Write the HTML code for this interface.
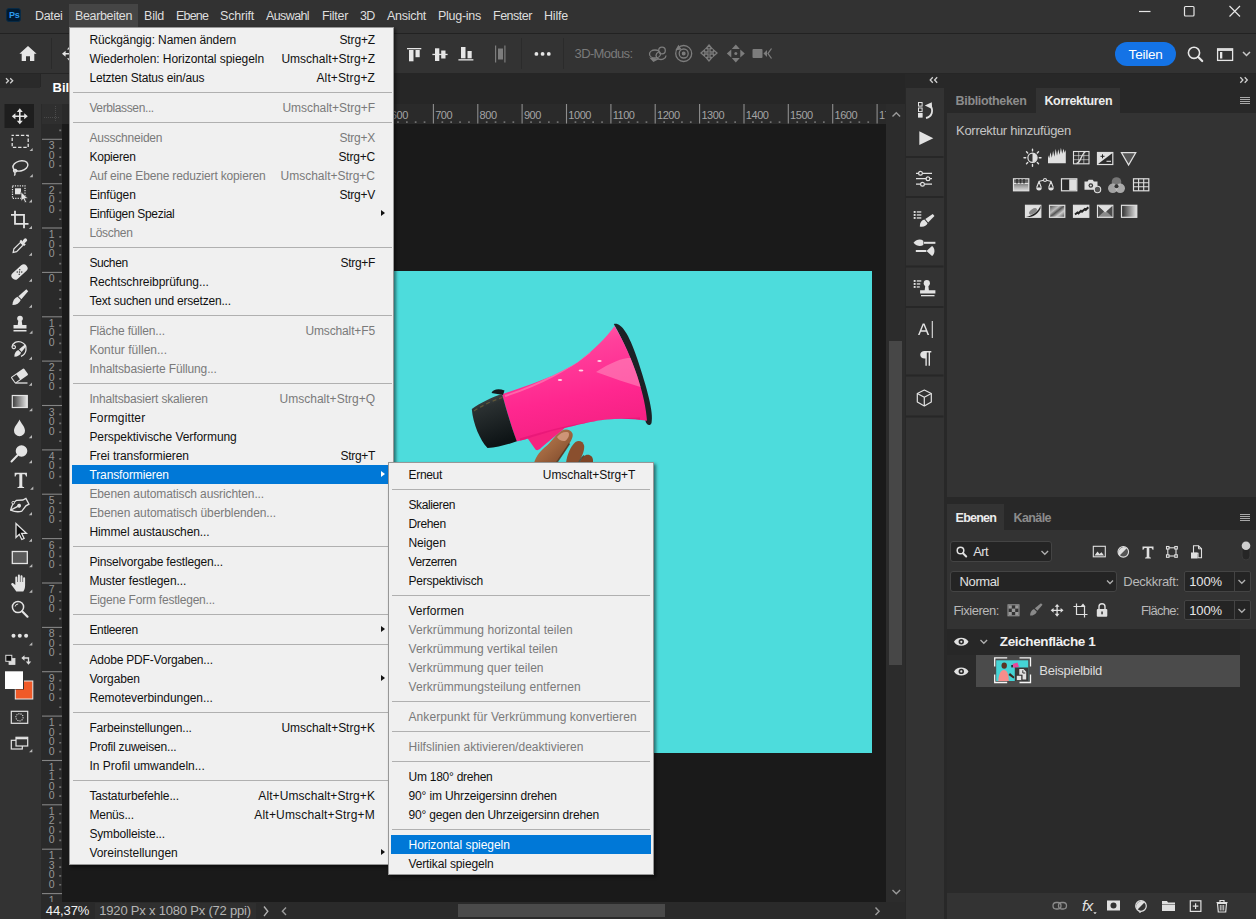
<!DOCTYPE html><html><head><meta charset="utf-8"><title>Photoshop</title><style>
*{box-sizing:border-box;margin:0;padding:0}
html,body{width:1256px;height:919px;overflow:hidden;background:#333;font-family:"Liberation Sans",sans-serif;font-size:12px;color:#ddd}
.abs,.b{position:absolute}
.t{position:absolute;white-space:nowrap;line-height:1}
svg{position:absolute;overflow:visible}
.menu{position:absolute;background:#f0f0f0;border:1px solid #979797;box-shadow:2px 2px 3px rgba(0,0,0,.5)}
.mt{position:absolute;white-space:nowrap;font-size:12px;line-height:14px}
.hl{position:absolute;height:19px;background:#0078d7}
.ar{position:absolute;width:0;height:0;border-left:4px solid #111;border-top:3.5px solid transparent;border-bottom:3.5px solid transparent}
.sep{position:absolute;height:1px;background:#b0b0b0}
.mb{position:absolute;top:9px;font-size:12.5px;line-height:14px;color:#e3e3e3;white-space:nowrap}
.rt{position:absolute;font-size:11px;line-height:11px;color:#a4a4a4;letter-spacing:-0.45px}
.vt{position:absolute;left:46.700px;width:10px;font-size:10.500px;line-height:9.500px;color:#969696;text-align:center}
</style></head><body>
<!--FRAME-->
<div class="b" style="left:0px;top:0px;width:1256px;height:33px;background:#323232;"></div>
<div class="b" style="left:0px;top:33px;width:1256px;height:1px;background:#222;"></div>
<div class="b" style="left:0px;top:34px;width:1256px;height:39px;background:#333;"></div>
<div class="b" style="left:0px;top:73px;width:1256px;height:15px;background:#262626;"></div>
<div class="b" style="left:0px;top:87px;width:41px;height:832px;background:#333;"></div>
<div class="b" style="left:0px;top:74px;width:40px;height:13.5px;background:#2a2a2a;"></div>
<div class="b" style="left:41px;top:74px;width:864px;height:30px;background:#262626;"></div>
<div class="b" style="left:41px;top:74px;width:40px;height:30px;background:#333;"></div>
<div class="b" style="left:41px;top:104px;width:845px;height:20px;background:#2a2a2a;"></div>
<div class="b" style="left:41px;top:124px;width:21px;height:778px;background:#2a2a2a;"></div>
<div class="b" style="left:62px;top:124px;width:824px;height:778px;background:#1a1a1a;"></div>
<div class="b" style="left:394px;top:271px;width:477.5px;height:481.5px;background:#4ddcdc;"></div>
<div class="b" style="left:886px;top:104px;width:19px;height:798px;background:#2c2c2c;"></div>
<div class="b" style="left:888.5px;top:340.5px;width:13px;height:324.5px;background:#474747;"></div>
<div class="b" style="left:41px;top:902px;width:864px;height:17px;background:#2a2a2a;"></div>
<div class="b" style="left:458px;top:904px;width:207px;height:13px;background:#4a4a4a;"></div>
<div class="b" style="left:905px;top:74px;width:351px;height:845px;background:#282828;"></div>
<div class="b" style="left:906px;top:88px;width:37.5px;height:831px;background:#333;"></div>
<div class="b" style="left:947px;top:88px;width:309px;height:25px;background:#282828;"></div>
<div class="b" style="left:1036px;top:88px;width:84px;height:26px;background:#333;"></div>
<div class="b" style="left:947px;top:113px;width:309px;height:383.5px;background:#333;"></div>
<div class="b" style="left:947px;top:504px;width:309px;height:26px;background:#282828;"></div>
<div class="b" style="left:947px;top:504px;width:57px;height:27px;background:#333;"></div>
<div class="b" style="left:947px;top:530px;width:309px;height:389px;background:#2e2e2e;"></div>
<!--MENUBAR-->
<div class="b" style="left:6px;top:8px;width:15px;height:14px;background:#001a30;border-radius:3px;border:1px solid #082a45"></div>
<span class="t" style="left:9px;top:10.5px;font-size:9px;font-weight:bold;color:#2c9bee;letter-spacing:-0.3px">Ps</span>
<div class="b" style="left:69px;top:4px;width:69px;height:23px;background:#454545"></div>
<span class="t" style="left:35px;top:9.8px;font-size:12.5px;color:#dedede;font-weight:normal;font-style:normal;letter-spacing:-0.338px;">Datei</span>
<span class="t" style="left:75px;top:9.8px;font-size:12.5px;color:#dedede;font-weight:normal;font-style:normal;letter-spacing:-0.347px;">Bearbeiten</span>
<span class="t" style="left:144px;top:9.8px;font-size:12.5px;color:#dedede;font-weight:normal;font-style:normal;letter-spacing:-0.211px;">Bild</span>
<span class="t" style="left:176px;top:9.8px;font-size:12.5px;color:#dedede;font-weight:normal;font-style:normal;letter-spacing:-0.800px;">Ebene</span>
<span class="t" style="left:220px;top:9.8px;font-size:12.5px;color:#dedede;font-weight:normal;font-style:normal;letter-spacing:-0.205px;">Schrift</span>
<span class="t" style="left:266px;top:9.8px;font-size:12.5px;color:#dedede;font-weight:normal;font-style:normal;letter-spacing:-0.607px;">Auswahl</span>
<span class="t" style="left:322px;top:9.8px;font-size:12.5px;color:#dedede;font-weight:normal;font-style:normal;letter-spacing:-0.297px;">Filter</span>
<span class="t" style="left:360px;top:9.8px;font-size:12.5px;color:#dedede;font-weight:normal;font-style:normal;letter-spacing:-0.742px;">3D</span>
<span class="t" style="left:387px;top:9.8px;font-size:12.5px;color:#dedede;font-weight:normal;font-style:normal;letter-spacing:-0.286px;">Ansicht</span>
<span class="t" style="left:438px;top:9.8px;font-size:12.5px;color:#dedede;font-weight:normal;font-style:normal;letter-spacing:-0.271px;">Plug-ins</span>
<span class="t" style="left:493px;top:9.8px;font-size:12.5px;color:#dedede;font-weight:normal;font-style:normal;letter-spacing:-0.484px;">Fenster</span>
<span class="t" style="left:544px;top:9.8px;font-size:12.5px;color:#dedede;font-weight:normal;font-style:normal;letter-spacing:-0.203px;">Hilfe</span>
<svg style="left:1130px;top:0" width="126" height="32" viewBox="0 0 126 32"><g stroke="#e6e6e6" stroke-width="1.2" fill="none"><path d="M9 11.5h11.5"/><rect x="54.5" y="6.5" width="9.5" height="9.5" rx="1"/><path d="M99.5 6l10.5 10.5M110 6l-10.5 10.5"/></g></svg>
<!--RULERS-->
<svg style="left:0;top:0" width="1256" height="919" viewBox="0 0 1256 919"><rect x="42" y="104" width="20" height="20" fill="#2f2f2f"/><g stroke="#4a4a4a" stroke-width="1" stroke-dasharray="1 1"><path d="M44 117.500h16M55.500 106v16"/></g><path d="M389.0 104v19.500" stroke="#8e8e8e" stroke-width="1.100"/><path d="M433.4 104v19.500" stroke="#8e8e8e" stroke-width="1.100"/><path d="M477.8 104v19.500" stroke="#8e8e8e" stroke-width="1.100"/><path d="M522.1 104v19.500" stroke="#8e8e8e" stroke-width="1.100"/><path d="M566.5 104v19.500" stroke="#8e8e8e" stroke-width="1.100"/><path d="M610.9 104v19.500" stroke="#8e8e8e" stroke-width="1.100"/><path d="M655.2 104v19.500" stroke="#8e8e8e" stroke-width="1.100"/><path d="M699.6 104v19.500" stroke="#8e8e8e" stroke-width="1.100"/><path d="M744.0 104v19.500" stroke="#8e8e8e" stroke-width="1.100"/><path d="M788.3 104v19.500" stroke="#8e8e8e" stroke-width="1.100"/><path d="M832.7 104v19.500" stroke="#8e8e8e" stroke-width="1.100"/><path d="M877.1 104v19.500" stroke="#8e8e8e" stroke-width="1.100"/><path d="M397.1 121.200h1.700v1.800h-1.700z M406.0 121.200h1.700v1.800h-1.700z M414.8 121.200h1.700v1.800h-1.700z M423.7 121.200h1.700v1.800h-1.700z M441.5 121.200h1.700v1.800h-1.700z M450.3 121.200h1.700v1.800h-1.700z M459.2 121.200h1.700v1.800h-1.700z M468.1 121.200h1.700v1.800h-1.700z M485.8 121.200h1.700v1.800h-1.700z M494.7 121.200h1.700v1.800h-1.700z M503.6 121.200h1.700v1.800h-1.700z M512.5 121.200h1.700v1.800h-1.700z M530.2 121.200h1.700v1.800h-1.700z M539.1 121.200h1.700v1.800h-1.700z M548.0 121.200h1.700v1.800h-1.700z M556.8 121.200h1.700v1.800h-1.700z M574.6 121.200h1.700v1.800h-1.700z M583.4 121.200h1.700v1.800h-1.700z M592.3 121.200h1.700v1.800h-1.700z M601.2 121.200h1.700v1.800h-1.700z M618.9 121.200h1.700v1.800h-1.700z M627.8 121.200h1.700v1.800h-1.700z M636.7 121.200h1.700v1.800h-1.700z M645.6 121.200h1.700v1.800h-1.700z M663.3 121.200h1.700v1.800h-1.700z M672.2 121.200h1.700v1.800h-1.700z M681.1 121.200h1.700v1.800h-1.700z M689.9 121.200h1.700v1.800h-1.700z M707.7 121.200h1.700v1.800h-1.700z M716.6 121.200h1.700v1.800h-1.700z M725.4 121.200h1.700v1.800h-1.700z M734.3 121.200h1.700v1.800h-1.700z M752.1 121.200h1.700v1.800h-1.700z M760.9 121.200h1.700v1.800h-1.700z M769.8 121.200h1.700v1.800h-1.700z M778.7 121.200h1.700v1.800h-1.700z M796.4 121.200h1.700v1.800h-1.700z M805.3 121.200h1.700v1.800h-1.700z M814.2 121.200h1.700v1.800h-1.700z M823.0 121.200h1.700v1.800h-1.700z M840.8 121.200h1.700v1.800h-1.700z M849.7 121.200h1.700v1.800h-1.700z M858.5 121.200h1.700v1.800h-1.700z M867.4 121.200h1.700v1.800h-1.700z" fill="#707070"/><path d="M42 139.3h20" stroke="#858585" stroke-width="1.100"/><path d="M42 183.7h20" stroke="#858585" stroke-width="1.100"/><path d="M42 228.0h20" stroke="#858585" stroke-width="1.100"/><path d="M42 272.4h20" stroke="#858585" stroke-width="1.100"/><path d="M42 316.8h20" stroke="#858585" stroke-width="1.100"/><path d="M42 361.1h20" stroke="#858585" stroke-width="1.100"/><path d="M42 405.5h20" stroke="#858585" stroke-width="1.100"/><path d="M42 449.9h20" stroke="#858585" stroke-width="1.100"/><path d="M42 494.2h20" stroke="#858585" stroke-width="1.100"/><path d="M42 538.6h20" stroke="#858585" stroke-width="1.100"/><path d="M42 583.0h20" stroke="#858585" stroke-width="1.100"/><path d="M42 627.4h20" stroke="#858585" stroke-width="1.100"/><path d="M42 671.7h20" stroke="#858585" stroke-width="1.100"/><path d="M42 716.1h20" stroke="#858585" stroke-width="1.100"/><path d="M42 760.5h20" stroke="#858585" stroke-width="1.100"/><path d="M42 804.8h20" stroke="#858585" stroke-width="1.100"/><path d="M42 849.2h20" stroke="#858585" stroke-width="1.100"/><path d="M42 893.6h20" stroke="#858585" stroke-width="1.100"/><path d="M59.200 129.6h2v1.700h-2z M59.200 147.4h2v1.700h-2z M59.200 156.2h2v1.700h-2z M59.200 165.1h2v1.700h-2z M59.200 174.0h2v1.700h-2z M59.200 191.7h2v1.700h-2z M59.200 200.6h2v1.700h-2z M59.200 209.5h2v1.700h-2z M59.200 218.4h2v1.700h-2z M59.200 236.1h2v1.700h-2z M59.200 245.0h2v1.700h-2z M59.200 253.9h2v1.700h-2z M59.200 262.7h2v1.700h-2z M59.200 280.5h2v1.700h-2z M59.200 289.3h2v1.700h-2z M59.200 298.2h2v1.700h-2z M59.200 307.1h2v1.700h-2z M59.200 324.8h2v1.700h-2z M59.200 333.7h2v1.700h-2z M59.200 342.6h2v1.700h-2z M59.200 351.5h2v1.700h-2z M59.200 369.2h2v1.700h-2z M59.200 378.1h2v1.700h-2z M59.200 387.0h2v1.700h-2z M59.200 395.8h2v1.700h-2z M59.200 413.6h2v1.700h-2z M59.200 422.5h2v1.700h-2z M59.200 431.3h2v1.700h-2z M59.200 440.2h2v1.700h-2z M59.200 458.0h2v1.700h-2z M59.200 466.8h2v1.700h-2z M59.200 475.7h2v1.700h-2z M59.200 484.6h2v1.700h-2z M59.200 502.3h2v1.700h-2z M59.200 511.2h2v1.700h-2z M59.200 520.1h2v1.700h-2z M59.200 528.9h2v1.700h-2z M59.200 546.7h2v1.700h-2z M59.200 555.6h2v1.700h-2z M59.200 564.4h2v1.700h-2z M59.200 573.3h2v1.700h-2z M59.200 591.1h2v1.700h-2z M59.200 599.9h2v1.700h-2z M59.200 608.8h2v1.700h-2z M59.200 617.7h2v1.700h-2z M59.200 635.4h2v1.700h-2z M59.200 644.3h2v1.700h-2z M59.200 653.2h2v1.700h-2z M59.200 662.1h2v1.700h-2z M59.200 679.8h2v1.700h-2z M59.200 688.7h2v1.700h-2z M59.200 697.6h2v1.700h-2z M59.200 706.4h2v1.700h-2z M59.200 724.2h2v1.700h-2z M59.200 733.0h2v1.700h-2z M59.200 741.9h2v1.700h-2z M59.200 750.8h2v1.700h-2z M59.200 768.5h2v1.700h-2z M59.200 777.4h2v1.700h-2z M59.200 786.3h2v1.700h-2z M59.200 795.2h2v1.700h-2z M59.200 812.9h2v1.700h-2z M59.200 821.8h2v1.700h-2z M59.200 830.7h2v1.700h-2z M59.200 839.5h2v1.700h-2z M59.200 857.3h2v1.700h-2z M59.200 866.2h2v1.700h-2z M59.200 875.0h2v1.700h-2z M59.200 883.9h2v1.700h-2z" fill="#707070"/><g stroke="#9a9a9a" stroke-width="1.400" fill="none"><path d="M892.500 116.500l3.800-3.800l3.800 3.800"/><path d="M892.500 890l3.800 3.800l3.800-3.800"/><path d="M875.500 907.500l3.600 3.800l-3.600 3.800"/><path d="M286 907.500l-3.600 3.800l3.600 3.800"/><path d="M264 906.500l3.800 4.800l-3.800 4.800" stroke="#b0b0b0"/></g></svg>
<div class="b" style="left:41px;top:104px;width:845px;height:20px;overflow:hidden">
<span class="rt" style="left:349.8px;top:5.700px">600</span>
<span class="rt" style="left:394.2px;top:5.700px">700</span>
<span class="rt" style="left:438.6px;top:5.700px">800</span>
<span class="rt" style="left:482.9px;top:5.700px">900</span>
<span class="rt" style="left:527.3px;top:5.700px">1000</span>
<span class="rt" style="left:571.7px;top:5.700px">1100</span>
<span class="rt" style="left:616.0px;top:5.700px">1200</span>
<span class="rt" style="left:660.4px;top:5.700px">1300</span>
<span class="rt" style="left:704.8px;top:5.700px">1400</span>
<span class="rt" style="left:749.1px;top:5.700px">1500</span>
<span class="rt" style="left:793.5px;top:5.700px">1600</span>
<span class="rt" style="left:837.9px;top:5.700px">1700</span>
</div>
<div class="b" style="left:0;top:124px;width:62px;height:778px;overflow:hidden">
<span class="vt" style="top:17.3px">3<br>0<br>0</span>
<span class="vt" style="top:61.7px">2<br>0<br>0</span>
<span class="vt" style="top:106.0px">1<br>0<br>0</span>
<span class="vt" style="top:150.4px">0</span>
<span class="vt" style="top:194.8px">1<br>0<br>0</span>
<span class="vt" style="top:239.1px">2<br>0<br>0</span>
<span class="vt" style="top:283.5px">3<br>0<br>0</span>
<span class="vt" style="top:327.9px">4<br>0<br>0</span>
<span class="vt" style="top:372.2px">5<br>0<br>0</span>
<span class="vt" style="top:416.6px">6<br>0<br>0</span>
<span class="vt" style="top:461.0px">7<br>0<br>0</span>
<span class="vt" style="top:505.4px">8<br>0<br>0</span>
<span class="vt" style="top:549.7px">9<br>0<br>0</span>
<span class="vt" style="top:594.1px">1<br>0<br>0<br>0</span>
<span class="vt" style="top:638.5px">1<br>1<br>0<br>0</span>
<span class="vt" style="top:682.8px">1<br>2<br>0<br>0</span>
<span class="vt" style="top:727.2px">1<br>3<br>0<br>0</span>
<span class="vt" style="top:771.6px">1<br>4<br>0<br>0</span>
</div>
<div class="b" style="left:95px;top:903px;width:161px;height:16px;background:#2f2f2f"></div>
<span class="t" style="left:45.8px;top:903.8px;font-size:13px;color:#f0f0f0;font-weight:normal;font-style:normal;letter-spacing:-0.099px;">44,37%</span>
<span class="t" style="left:99.3px;top:903.8px;font-size:13px;color:#b4b4b4;font-weight:normal;font-style:normal;letter-spacing:-0.201px;">1920 Px x 1080 Px (72 ppi)</span>
<!--PHOTO-->
<svg style="left:0;top:0" width="1256" height="919" viewBox="0 0 1256 919">
<defs>
<linearGradient id="pk" x1="0" y1="0" x2="0.25" y2="1"><stop offset="0" stop-color="#ff6cb0"/><stop offset="0.3" stop-color="#ff409b"/><stop offset="0.7" stop-color="#ff278f"/><stop offset="1" stop-color="#f52183"/></linearGradient>
<linearGradient id="bk" x1="0" y1="0" x2="0.3" y2="1"><stop offset="0" stop-color="#555a58"/><stop offset="0.3" stop-color="#2a3031"/><stop offset="1" stop-color="#0e1416"/></linearGradient>
<linearGradient id="hd" x1="0" y1="0" x2="1" y2="1"><stop offset="0" stop-color="#b9805c"/><stop offset="0.5" stop-color="#a0663f"/><stop offset="1" stop-color="#7a4629"/></linearGradient>
<clipPath id="cone"><path d="M614.5 326 C606 338 594 350 577.4 362.5 C562 372 544 380 524.5 386.5 L502 394.2 C506 408 511 426 516.6 441.5 C522 440.5 528 438.5 532.3 437 C545 433 556 430 567.6 427.3 C583 423.5 596 420.5 606.7 419.5 C622 418 636 419 647 420.8 C646 398 633 356 614.5 326 Z"/></clipPath>
<clipPath id="cv"><rect x="394" y="271" width="477" height="192"/></clipPath>
</defs>
<g clip-path="url(#cv)">
<!-- hand -->
<path d="M566 463 C567 455 570 447 575.500 442 C579 439.500 583.500 441.500 584.200 446 C584.500 452 581 458 578 463 Z" fill="#8a4f2e"/>
<path d="M579.500 463 C580.500 459 583 456 586.500 454.800 C590 454 592.800 456.500 593 460 L593 463 Z" fill="#7e4527"/>
<path d="M534 463 C536 456 541 450 547 445.500 C552 441 556 434 562 430.500 C566 428.500 571 430 572.500 433.500 C573.500 437 571 441 568.500 445 C565 451 560 458 556 463 Z" fill="url(#hd)"/>
<path d="M557 437 C560 433 565 431 568.500 432.500 C570 435 568 439 565 441 C562 441.500 558.500 440 557 437 Z" fill="#d9a184" opacity=".8"/>
<path d="M556.500 463 C561 456 566 449 569.500 443.500 M578.500 463 C580 459.500 582 457 584 455.500" stroke="#4f2a17" stroke-width="1.500" fill="none" opacity=".75"/>
<!-- handle -->
<path d="M526 436 L535.500 449.500 Q538 452 542 447 L566 427 Z" fill="#f5237f"/>
<!-- rim (black) -->
<path d="M613.8 324 C620 322 628 331 637 358 C647 388 654 413 651.5 423 C650 427 646 424.5 645.5 421 C646 400 634 360 613.8 324 Z" fill="#1b2226"/>
<!-- pink cone -->
<path d="M614.5 326 C606 338 594 350 577.4 362.5 C562 372 544 380 524.5 386.5 L502 394.2 C506 408 511 426 516.6 441.5 C522 440.5 528 438.5 532.3 437 C545 433 556 430 567.6 427.3 C583 423.5 596 420.5 606.7 419.5 C622 418 636 419 647 420.8 C646 398 633 356 614.5 326 Z" fill="url(#pk)"/>
<!-- highlights -->
<g clip-path="url(#cone)">
<path d="M596 372 C612 362 624 357 634 358 C639 370 642 380 643.5 388 C628 383 612 378 596 372 Z" fill="#ff8fc0" opacity=".55"/>
<path d="M505 396 C530 388 560 376 590 352" stroke="#ff7bb4" stroke-width="2" fill="none" opacity=".7"/>
<path d="M520 440 C550 431 590 420 640 419" stroke="#e0106f" stroke-width="3" fill="none" opacity=".55"/>
</g>
<g fill="#ffd3e6"><ellipse cx="560" cy="380" rx="2.2" ry="1"/><ellipse cx="581" cy="370.5" rx="2.4" ry="1.1"/><ellipse cx="599.5" cy="361" rx="2.2" ry="1.1"/></g>
<!-- back (black) part -->
<path d="M491.5 393 C493 389 499 388.5 504.5 390.5 L503 395 Z" fill="#141a1c"/>
<path d="M471.8 409 C480 403 492 397 502 394 C506 408 511 426 516.8 441.3 C508 444.5 497 447.5 487.5 448 C480 440 473 424 471.8 409 Z" fill="url(#bk)"/>
<path d="M474 411 C483 405 493 400.5 502.5 397.5" stroke="#6b5f3a" stroke-width="1.2" fill="none" opacity=".8" stroke-dasharray="4 3"/>
</g>
</svg>
<!--TOOLS-->
<svg style="left:0;top:0" width="41" height="919" viewBox="0 0 41 919"><path d="M6 78.300l2.500 2.500l-2.500 2.500M10.200 78.300l2.500 2.500l-2.500 2.500" stroke="#d0d0d0" stroke-width="1.300" fill="none"/><rect x="4.5" y="104" width="29.5" height="24" fill="#1e1e1e"/><g transform="translate(19.8 116.3)"><path d="M0 -8l3 3.6h-2.2v3.6h3.6v-2.2l3.6 3l-3.6 3v-2.2h-3.6v3.6h2.2l-3 3.6l-3-3.6h2.2v-3.6h-3.6v2.2l-3.6-3l3.6-3v2.2h3.6v-3.6h-2.2z" fill="#e4e4e4"/></g><g transform="translate(20.2 141.4)"><rect x="-8" y="-6" width="16" height="12" fill="none" stroke="#e4e4e4" stroke-width="1.3" stroke-dasharray="3.4 1.8" stroke-dashoffset="1.7"/></g><path d="M32.7 147.9v3.2h-3.2z" fill="#b8b8b8"/><g transform="translate(20.3 167.5)"><g fill="none" stroke="#e4e4e4" stroke-width="1.4"><ellipse cx="0.5" cy="-1.5" rx="7.6" ry="5" transform="rotate(-14)"/><path d="M-6 1.5c-1.5 1.5-.5 3.4 1.2 3c1.6-.4 1.4-2.6-.2-2.6c-1.3 0-1.8 1.600-.6 3.200c.7 1 .4 2 -.3 3"/></g></g><path d="M32.8 174.0v3.2h-3.2z" fill="#b8b8b8"/><g transform="translate(19.5 192.8)"><rect x="-7" y="-7" width="12.5" height="12.5" fill="none" stroke="#e4e4e4" stroke-width="1.2" stroke-dasharray="1.2 1.2"/><rect x="-4.5" y="-4.5" width="6" height="6" fill="#e4e4e4"/><path d="M1.5 -1v9.500l2.300-2.200l1.700 3.600l1.600-.7l-1.700-3.500h3.200z" fill="#e4e4e4" stroke="#333" stroke-width=".7"/></g><path d="M32.0 199.3v3.2h-3.2z" fill="#b8b8b8"/><g transform="translate(19.5 219.3)"><path d="M-4.500 -8.500v13h13.500M-8.500 -4.500h13v13.500" fill="none" stroke="#e4e4e4" stroke-width="1.8"/></g><path d="M32.0 225.8v3.2h-3.2z" fill="#b8b8b8"/><g transform="translate(19.5 246)"><g transform="rotate(45)"><rect x="-1.700" y="-10" width="3.400" height="5" rx="1.600" fill="#e4e4e4"/><rect x="-3.300" y="-5.500" width="6.600" height="2.200" fill="#e4e4e4"/><path d="M-1.900 -3.300v9.300l1.900 3l1.900-3v-9.300z" fill="none" stroke="#e4e4e4" stroke-width="1.200"/></g></g><path d="M32.0 252.5v3.2h-3.2z" fill="#b8b8b8"/><g transform="translate(19.5 272)"><g transform="rotate(-42)"><rect x="-9.500" y="-3.800" width="19" height="7.600" rx="3.800" fill="#e4e4e4"/><g fill="#333"><circle cx="-1.700" cy="-1.500" r=".7"/><circle cx="1.700" cy="-1.500" r=".7"/><circle cx="-1.700" cy="1.500" r=".7"/><circle cx="1.700" cy="1.500" r=".7"/><circle cx="0" cy="0" r=".7"/></g></g></g><path d="M32.0 278.5v3.2h-3.2z" fill="#b8b8b8"/><g transform="translate(19.5 298)"><g transform="rotate(45)"><path d="M-1.300 -11h2.600l.8 10.500h-4.200z" fill="#e4e4e4"/><path d="M-2.300 .5h4.600c1.200 3 .6 6.500-2.300 9.500c-2.900-3-3.500-6.500-2.300-9.500z" fill="#e4e4e4"/></g></g><path d="M32.0 304.5v3.2h-3.2z" fill="#b8b8b8"/><g transform="translate(20 324)"><circle cx="0" cy="-5.500" r="2.800" fill="#e4e4e4"/><path d="M-1.700 -3.500h3.400l.6 4.500h4.200v3.500h-13v-3.500h4.200z" fill="#e4e4e4"/><rect x="-6.500" y="6" width="13" height="1.500" fill="#e4e4e4"/></g><path d="M32.5 330.5v3.2h-3.2z" fill="#b8b8b8"/><g transform="translate(19.5 350)"><path d="M-7.500 -3c.5-4 5-6.500 9-5c3.500 1.300 5.500 4.500 5 8c-.4 3-2.400 5.300-5 6.300" fill="none" stroke="#e4e4e4" stroke-width="1.300"/><path d="M-7.500 -3c.3 1.800 2.500 2.300 3.300 .8c.7-1.400-.9-2.700-2-1.700" fill="none" stroke="#e4e4e4" stroke-width="1.200"/><g transform="translate(0.500 1) rotate(45)"><path d="M-1.100 -8h2.200l.7 7.500h-3.600z" fill="#e4e4e4"/><path d="M-2 .5h4c1 2.500 .5 5-2 7.500c-2.500-2.500-3-5-2-7.500z" fill="#e4e4e4"/></g></g><path d="M32.0 356.5v3.2h-3.2z" fill="#b8b8b8"/><g transform="translate(19.5 376)"><g transform="rotate(-35)"><rect x="-8" y="-4" width="16" height="8" rx="1" fill="#e4e4e4"/><rect x="-7" y="-3" width="5.500" height="6" fill="#333"/></g><path d="M-4 7h12" stroke="#e4e4e4" stroke-width="1.300"/></g><path d="M32.0 382.5v3.2h-3.2z" fill="#b8b8b8"/><defs><linearGradient id="tg" x1="0" x2="1"><stop offset="0" stop-color="#3a3a3a"/><stop offset="1" stop-color="#e8e8e8"/></linearGradient></defs><g transform="translate(19.8 401.5)"><rect x="-7.500" y="-6" width="15" height="12" fill="url(#tg)" stroke="#e4e4e4" stroke-width="1.200"/></g><path d="M32.3 408.0v3.2h-3.2z" fill="#b8b8b8"/><g transform="translate(19.5 428.5)"><path d="M0 -9c1.500 4 5.500 7 5.500 11.200a5.500 5.500 0 0 1-11 0c0-4.200 4-7.200 5.500-11.200z" fill="#e4e4e4"/></g><path d="M32.0 435.0v3.2h-3.2z" fill="#b8b8b8"/><g transform="translate(19.5 453.5)"><circle cx="2" cy="-2.500" r="5.800" fill="#e4e4e4"/><path d="M-2 1.800l-6 6.200" stroke="#e4e4e4" stroke-width="2" stroke-linecap="round"/></g><path d="M32.0 460.0v3.2h-3.2z" fill="#b8b8b8"/><g transform="translate(20.8 480)"><path transform="scale(.82 .9)" d="M-7.500 -8h15v4h-1.200c-.3-1.700-1-2.400-2.800-2.400h-1.700v12.400c0 1.300.5 1.700 2.200 1.800v1.200h-8v-1.200c1.700-.1 2.200-.5 2.200-1.800v-12.400h-1.700c-1.800 0-2.500.7-2.800 2.400h-1.200z" fill="#e4e4e4"/></g><path d="M33.3 486.5v3.2h-3.2z" fill="#b8b8b8"/><g transform="translate(19.5 505.5)"><g transform="rotate(62) translate(0 .5)" fill="none" stroke="#e4e4e4" stroke-width="1.300"><path d="M-3.300 -9.500h6.600v3.500l2.700 6c-.5 4-3 7-6 9.500c-3-2.500-5.500-5.500-6-9.500l2.700-6z"/><path d="M0 9.500v-8"/><circle cx="0" cy="0" r="1.300" fill="#e4e4e4"/></g><circle cx="-6.300" cy="-2.800" r="1.300" fill="#333" stroke="#e4e4e4" stroke-width="1"/></g><path d="M32.0 512.0v3.2h-3.2z" fill="#b8b8b8"/><g transform="translate(19.5 532)"><path d="M-3.500 -8.500v14l3.300-3.200l2.500 5.200l2.300-1.100l-2.500-5.100h4.800z" fill="#111" stroke="#e4e4e4" stroke-width="1.300" stroke-linejoin="miter"/></g><path d="M32.0 538.5v3.2h-3.2z" fill="#b8b8b8"/><g transform="translate(19.8 557.5)"><rect x="-7.500" y="-6" width="15" height="12" fill="#5a5a5a" stroke="#e4e4e4" stroke-width="1.300"/></g><path d="M32.3 564.0v3.2h-3.2z" fill="#b8b8b8"/><g transform="translate(19.8 583)"><path d="M-3.500 8.500c-1.500-2-3-4.500-4.800-6.500c-1-1.100.4-2.600 1.700-1.700l2.100 1.800v-7.600c0-1.500 2-1.500 2 0v4.500h.6v-6.500c0-1.500 2-1.500 2 0v6.500h.6v-5.700c0-1.500 2-1.500 2 0v5.700h.6v-3.700c0-1.500 2-1.500 2 0v7.200c0 2.500-.8 4.500-1.800 6z" fill="#e4e4e4"/></g><path d="M32.3 589.5v3.2h-3.2z" fill="#b8b8b8"/><g transform="translate(19.5 609)"><circle cx="-1.500" cy="-2" r="5.600" fill="none" stroke="#e4e4e4" stroke-width="1.500"/><path d="M2.600 2.300l5.400 5.400" stroke="#e4e4e4" stroke-width="2.200" stroke-linecap="round"/><path d="M-4.300 -2.500a3 3 0 0 1 3-2.500" stroke="#e4e4e4" stroke-width="1" fill="none"/></g><g transform="translate(19.8 635.7)"><circle cx="-6.300" r="2" fill="#e4e4e4"/><circle cx="0" r="2" fill="#e4e4e4"/><circle cx="6.300" r="2" fill="#e4e4e4"/></g><path d="M32.3 642.2v3.2h-3.2z" fill="#b8b8b8"/><rect x="9" y="658.500" width="6" height="6" fill="#ddd" stroke="#ddd" stroke-width=".8"/><rect x="5.800" y="655.300" width="6" height="6" fill="#111" stroke="#ddd" stroke-width="1"/><path d="M24 658h4.500v4" fill="none" stroke="#ddd" stroke-width="1.300"/><path d="M24.500 655.300v5.400l-3.200-2.700z M25.800 661.500h5.400l-2.700 3.200z" fill="#ddd"/><rect x="15.300" y="681" width="17.500" height="18" fill="#f05a28" stroke="#e8e8e8" stroke-width="1"/><rect x="14.500" y="680" width="9.500" height="9.500" fill="#333"/><rect x="5" y="671.300" width="18" height="17.700" fill="#fff" stroke="#222" stroke-width="0"/><rect x="11.300" y="711.300" width="16.400" height="12" fill="none" stroke="#e4e4e4" stroke-width="1.200"/><circle cx="19.500" cy="717.300" r="3.600" fill="none" stroke="#e4e4e4" stroke-width="1.100" stroke-dasharray="1.100 1.100"/><rect x="11.300" y="740.300" width="11" height="8.700" fill="#333" stroke="#e4e4e4" stroke-width="1.200"/><rect x="16" y="737.300" width="11.700" height="8.700" fill="#333" stroke="#e4e4e4" stroke-width="1.200"/><path d="M16 738.500h11.700" stroke="#e4e4e4" stroke-width="1.600"/><path d="M32.300 749v3.200h-3.200z" fill="#b8b8b8"/></svg>
<!--OPTBAR-->
<svg style="left:0;top:0" width="1256" height="74" viewBox="0 0 1256 74">
<path d="M28 46l8.600 7.800h-2.300v7.200h-4.300v-4.800h-4v4.800h-4.300v-7.200h-2.300z" fill="#e6e6e6"/>
<path d="M51.500 38v31" stroke="#2a2a2a" stroke-width="1"/>
<g transform="translate(70 53.800)"><path d="M0 -8l3 3.600h-2.200v3.600h3.600v-2.200l3.600 3l-3.600 3v-2.200h-3.600v3.600h2.200l-3 3.600l-3-3.600h2.200v-3.600h-3.600v2.200l-3.600-3l3.600-3v2.200h3.600v-3.600h-2.200z" fill="#e6e6e6"/></g>
<g fill="#e6e6e6"><rect x="407" y="48" width="14.300" height="1.300"/><rect x="409" y="50" width="4.500" height="11.300"/><rect x="415.500" y="50" width="4.200" height="7.200"/><rect x="432.400" y="53.800" width="15.200" height="1.300"/><rect x="435" y="48.300" width="4.300" height="12.700"/><rect x="441.200" y="50.500" width="4.300" height="8"/><rect x="458.400" y="59.200" width="15" height="1.300"/><rect x="461" y="47" width="4.500" height="11.300"/><rect x="467.500" y="51" width="4.200" height="7.300"/></g>
<g fill="#7d7d7d"><rect x="495" y="45.500" width="1.200" height="17"/><rect x="504.300" y="45.500" width="1.200" height="17"/><rect x="498" y="48.500" width="5" height="11"/></g>
<path d="M521.500 38v31M563.500 38v31" stroke="#2b2b2b" stroke-width="1"/>
<g fill="#e6e6e6"><circle cx="536.400" cy="53.900" r="1.900"/><circle cx="542.600" cy="53.900" r="1.900"/><circle cx="548.800" cy="53.900" r="1.900"/></g>
<g fill="none" stroke="#7d7d7d" stroke-width="1.300"><circle cx="662" cy="50.500" r="3.300"/><path d="M658.500 52a5 4 0 1 0 7.500 3.500"/><ellipse cx="655" cy="54" rx="5.500" ry="4"/><path d="M651 58.500l6 .8l-3.500 1.800z" fill="#7d7d7d"/><circle cx="683.700" cy="53.500" r="8"/><circle cx="683.700" cy="53.500" r="4.500"/><circle cx="683.700" cy="53.500" r="1.300" fill="#7d7d7d"/><path d="M676.500 49.500l2 -3.500l2 3z" fill="#7d7d7d"/><path d="M709 45l3 3.500h-2v3.500h3.500v-2l3.500 3l-3.500 3v-2h-3.500v3.500h2l-3 3.500l-3-3.500h2v-3.500h-3.500v2l-3.500-3l3.500-3v2h3.500v-3.500h-2z"/></g>
<g fill="#7d7d7d"><path d="M735.800 44.500l4 4.500h-8zM735.800 62.500l4-4.500h-8zM726.800 53.500l4.500-4v8zM744.800 53.500l-4.500-4v8z"/><circle cx="735.800" cy="53.500" r="1.500"/><rect x="752.500" y="49" width="10" height="9" rx="1"/><path d="M763.500 53.500l3.500-3.500v7z"/></g><path d="M771.500 48.500l-3.500 5l3.500 5" fill="none" stroke="#7d7d7d" stroke-width="1.300"/>
<circle cx="1194" cy="52.800" r="5.600" fill="none" stroke="#e6e6e6" stroke-width="1.600"/><path d="M1198.200 57l4 4" stroke="#e6e6e6" stroke-width="2.200" stroke-linecap="round"/>
<rect x="1217.600" y="48.800" width="15" height="11.600" fill="none" stroke="#e6e6e6" stroke-width="1.300"/><path d="M1217.600 50h15" stroke="#e6e6e6" stroke-width="1.800"/><rect x="1220" y="52" width="2.300" height="6.500" fill="#e6e6e6"/>
<path d="M1243 52l3.500 3.500l3.500-3.500" fill="none" stroke="#c8c8c8" stroke-width="1.500"/>
</svg>
<div class="b" style="left:1115px;top:42px;width:61px;height:24px;border-radius:12px;background:#1473e6"></div>
<span class="t" style="left:1128.6px;top:47.8px;font-size:13.5px;color:#fff;font-weight:normal;font-style:normal;letter-spacing:-0.197px;">Teilen</span>
<span class="t" style="left:574.6px;top:47.0px;font-size:13px;color:#7a7a7a;font-weight:normal;font-style:normal;letter-spacing:-0.642px;">3D-Modus:</span>
<span class="t" style="left:52.5px;top:81.0px;font-size:13px;color:#fff;font-weight:bold;font-style:normal;letter-spacing:0.000px;">Bild</span>
<!--STRIP-->
<svg style="left:0;top:0" width="1256" height="919" viewBox="0 0 1256 919"><path d="M932.800 77.300l-2.600 2.700l2.600 2.700M937.200 77.300l-2.600 2.700l2.600 2.700" stroke="#d0d0d0" stroke-width="1.300" fill="none"/><path d="M1240.300 77.300l2.600 2.700l-2.600 2.700M1244.700 77.300l2.600 2.700l-2.600 2.700" stroke="#d0d0d0" stroke-width="1.300" fill="none"/><rect x="906" y="156" width="37.500" height="2" fill="#272727"/><rect x="906" y="196" width="37.500" height="2" fill="#272727"/><rect x="906" y="265.5" width="37.500" height="2" fill="#272727"/><rect x="906" y="306" width="37.500" height="2" fill="#272727"/><rect x="906" y="374.5" width="37.500" height="2" fill="#272727"/><rect x="906" y="415.5" width="37.500" height="2" fill="#272727"/><g fill="none" stroke="#e2e2e2" stroke-width="1"><rect x="918.500" y="102.500" width="3.600" height="3.600"/><rect x="918.500" y="108" width="3.600" height="3.600"/><rect x="918.500" y="113.500" width="3.600" height="3.600" fill="#e2e2e2"/></g><path d="M926 118c6-1.200 8-7.500 4-13" fill="none" stroke="#e2e2e2" stroke-width="1.800"/><path d="M924.800 105.500l7-3.300l.3 6.800z" fill="#e2e2e2"/><path d="M919.300 131.300l14 6.900l-14 6.900z" fill="#e2e2e2"/><g stroke="#e2e2e2" stroke-width="1.200" fill="#333"><path d="M916 173.300h16M916 178.700h16M916 184.200h16"/><circle cx="920.500" cy="173.300" r="1.900"/><circle cx="928" cy="178.700" r="1.900"/><circle cx="922.500" cy="184.200" r="1.900"/></g><g fill="#e2e2e2"><rect x="913.700" y="211" width="1.900" height="1.900"/><rect x="913.700" y="214" width="1.900" height="1.900"/><rect x="913.700" y="217" width="1.900" height="1.900"/><rect x="916.800" y="211.300" width="4.500" height="1.300"/><rect x="916.800" y="214.300" width="4.500" height="1.300"/><rect x="916.800" y="217.300" width="4.500" height="1.300"/></g><g transform="translate(924.800 222.300) rotate(50)" fill="#e2e2e2"><path d="M-1.300 -11.500h2.600l.9 9h-4.400z"/><path d="M-2.500 -1.500h5c1.200 2.500.6 5.500-2.500 8c-3.100-2.500-3.700-5.500-2.500-8z"/></g><g fill="#e2e2e2"><path d="M913.500 242.700c3-3.500 7-4 9.800-2v4.200c-2.800 1.800-6.800 1.300-9.800-2.200z"/><rect x="923.800" y="241.800" width="11.600" height="2"/><rect x="915.800" y="250" width="10.500" height="2"/><path d="M926.500 251l5.500-5c3 1.500 3.500 8 0 10z"/></g><g fill="#e2e2e2"><rect x="913.700" y="280" width="1.900" height="1.900"/><rect x="913.700" y="283" width="1.900" height="1.900"/><rect x="913.700" y="286" width="1.900" height="1.900"/><rect x="916.800" y="280.300" width="4.500" height="1.300"/><rect x="916.800" y="283.300" width="3.500" height="1.300"/><rect x="916.800" y="286.300" width="3" height="1.300"/><circle cx="926.800" cy="283.200" r="3.100"/><path d="M925.300 285.500h3l.6 4.800h6.500v3.300h-15.300v-3.300h4.600z"/><rect x="921" y="295" width="13.500" height="1.300"/></g><path d="M918 335l4.700-11.500h1.800l4.700 11.500h-1.700l-1.300-3.300h-5.300l-1.300 3.300zM921.500 330.300h4.200l-2.100-5.300z" fill="#e2e2e2"/><path d="M932.300 321v17" stroke="#e2e2e2" stroke-width="1.100"/><path d="M924.500 351h6.800v1.400h-1.300v13.300h-1.400v-13.300h-1.800v13.300h-1.400v-7.200c-3 .3-5.200-1.300-5.200-3.700s2-3.800 4.300-3.800z" fill="#e2e2e2"/><g fill="none" stroke="#e2e2e2" stroke-width="1.200" stroke-linejoin="round"><path d="M924.300 390l7 3.500v8.500l-7 4l-7-4v-8.500z"/><path d="M917.300 393.500l7 3.700l7-3.700M924.300 397.200v8.800"/></g></svg>
<!--CORR-->
<span class="t" style="left:955.6px;top:95.0px;font-size:12.5px;color:#8c8c8c;font-weight:bold;font-style:normal;letter-spacing:-0.343px;">Bibliotheken</span>
<span class="t" style="left:1044.4px;top:95.0px;font-size:12.5px;color:#ececec;font-weight:bold;font-style:normal;letter-spacing:-0.332px;">Korrekturen</span>
<span class="t" style="left:956px;top:124.0px;font-size:13px;color:#c4c4c4;font-weight:normal;font-style:normal;letter-spacing:-0.284px;">Korrektur hinzufügen</span>
<svg style="left:0;top:0" width="1256" height="919" viewBox="0 0 1256 919"><defs>
<linearGradient id="gh" x1="0" x2="1"><stop offset="0" stop-color="#2b2b2b"/><stop offset="1" stop-color="#e6e6e6"/></linearGradient>
<linearGradient id="gv" x1="0" x2="0" y1="0" y2="1"><stop offset="0" stop-color="#444"/><stop offset="1" stop-color="#ddd"/></linearGradient>
<linearGradient id="gd" x1="0" y1="0" x2="1" y2="1"><stop offset="0" stop-color="#444"/><stop offset=".35" stop-color="#bbb"/><stop offset=".5" stop-color="#555"/><stop offset=".7" stop-color="#ccc"/><stop offset="1" stop-color="#444"/></linearGradient>
<radialGradient id="gr"><stop offset="0" stop-color="#555"/><stop offset="1" stop-color="#d8d8d8"/></radialGradient>
</defs><path d="M1240 97.5h10M1240 99.5h10M1240 101.5h10M1240 103.5h10" stroke="#a8a8a8" stroke-width="1"/><path d="M1240 514.5h10M1240 516.5h10M1240 518.5h10M1240 520.5h10" stroke="#a8a8a8" stroke-width="1"/><g transform="translate(1032.500 157.700)"><circle r="4.600" fill="none" stroke="#e0e0e0" stroke-width="1.200"/><path d="M0 -4.600a4.600 4.600 0 0 1 0 9.200z" fill="#e0e0e0"/><g stroke="#e0e0e0" stroke-width="1.400" stroke-linecap="round"><path d="M0 -6.800v-1.700M0 6.800v1.700M-6.800 0h-1.700M6.800 0h1.700M-4.800 -4.800l-1.200-1.200M4.800 -4.800l1.200-1.200M-4.800 4.800l-1.200 1.200M4.800 4.800l1.200 1.200"/></g></g><path d="M1048 163.200v-8l1.200 3l1.300-6l1.300 5.500l1.300-7l1.300 6l1.300-8l1.300 7l1.300-6.500l1.300 5.500l1.300-7l1.300 6l1.300-5l1.200 4l1.100-3v13.500z" fill="#e0e0e0"/><g fill="none" stroke="#e0e0e0"><rect x="1073.500" y="151.500" width="15.500" height="12.300" stroke-width="1.100"/><path d="M1078.700 151.500v12.300M1083.800 151.500v12.300M1073.500 155.600h15.500M1073.500 159.700h15.500" stroke-width=".8" opacity=".8"/><path d="M1076.500 163.500c5-1 4.500-10.500 9.500-12" stroke-width="1.300"/></g><rect x="1097.500" y="152.500" width="15.300" height="12" fill="#2a2a2a" stroke="#e0e0e0" stroke-width="1.200"/><path d="M1098 153h14.500l-14.500 11z" fill="#e0e0e0"/><path d="M1100.500 156.300h4M1102.500 154.300v4" stroke="#222" stroke-width="1"/><path d="M1106.500 161.300h4.500" stroke="#e0e0e0" stroke-width="1.100"/><path d="M1121.500 152.700h14.200l-7.100 12.300z" fill="#555" stroke="#e0e0e0" stroke-width="1.300"/><rect x="1013.500" y="178.800" width="15.300" height="12" fill="url(#gv)" stroke="#e0e0e0" stroke-width="1.200"/><path d="M1013.500 183.500h15.300" stroke="#e0e0e0" stroke-width="1"/><path d="M1017 179v4.500M1020.500 179v4.500M1024 179v4.500" stroke="#333" stroke-width="1.600"/><g fill="none" stroke="#e0e0e0" stroke-width="1.100"><circle cx="1045" cy="180" r="1.500"/><path d="M1038.500 181.500l5-1.300M1046.500 180.200l5 1.300M1039 181.500l-2.300 6M1039 181.500l2.300 6M1051 181.500l-2.300 6M1051 181.500l2.300 6"/></g><path d="M1036.200 187.500h5.600a2.800 3 0 0 1-5.600 0zM1048.200 187.500h5.600a2.800 3 0 0 1-5.600 0z" fill="#e0e0e0"/><rect x="1061.500" y="178.800" width="15.300" height="12" fill="#2a2a2a" stroke="#e0e0e0" stroke-width="1.200"/><rect x="1069.200" y="179.300" width="7.200" height="11" fill="#e0e0e0"/><path d="M1084.500 181.500h3l1.200-1.800h4l1.200 1.800h3.600v8.300h-13z" fill="#e0e0e0"/><circle cx="1090.800" cy="185.500" r="2.300" fill="#333"/><circle cx="1090.800" cy="185.500" r="1.100" fill="#e0e0e0"/><circle cx="1097.500" cy="189.500" r="3.200" fill="#555" stroke="#e0e0e0" stroke-width="1.100"/><g opacity=".95"><circle cx="1116.500" cy="182" r="4.800" fill="#7a7a7a"/><circle cx="1112.800" cy="188.300" r="4.800" fill="#bdbdbd" opacity=".85"/><circle cx="1120.200" cy="188.300" r="4.800" fill="#cfcfcf" opacity=".8"/><circle cx="1116.500" cy="186.200" r="2" fill="#333"/></g><g fill="none" stroke="#e0e0e0"><rect x="1133.500" y="178.800" width="15.300" height="12" stroke-width="1.200"/><path d="M1138.600 178.800v12M1143.700 178.800v12M1133.500 182.800h15.300M1133.500 186.800h15.300" stroke-width="1.100"/></g><rect x="1025.500" y="205.300" width="15.300" height="12" fill="#e0e0e0" stroke="#e0e0e0" stroke-width="1.200"/><path d="M1026 217c6-1 13-6 14.500-11.500v3c-2 5-7 8-11 8.500z" fill="#222"/><ellipse cx="1033" cy="211.300" rx="4.500" ry="2.300" transform="rotate(-35 1033 211.300)" fill="#888"/><rect x="1049.500" y="205.300" width="15.300" height="12" fill="url(#gd)" stroke="#e0e0e0" stroke-width="1.200"/><rect x="1073.500" y="205.300" width="15.300" height="12" fill="#e0e0e0" stroke="#e0e0e0" stroke-width="1.200"/><path d="M1075 214.500l2.500-2l1 .8l2.500-2.500l1 .8l2.800-2.600l1 .8l2.500-2.500" fill="none" stroke="#222" stroke-width="2"/><rect x="1097.500" y="205.300" width="15.300" height="12" fill="#8a8a8a" stroke="#e0e0e0" stroke-width="1.200"/><path d="M1098 206l7.200 6.500l7.200-6.500z" fill="#e0e0e0"/><path d="M1098 206v11l6-5.500zM1112.400 206v11l-6-5.500z" fill="#4a4a4a"/><rect x="1121.500" y="205.300" width="15.300" height="12" fill="url(#gh)" stroke="#e0e0e0" stroke-width="1.200"/></svg>
<!--LAYERS-->
<div class="b" style="left:947px;top:530px;width:309px;height:99px;background:#333;"></div>
<div class="b" style="left:947px;top:629px;width:309px;height:264px;background:#2a2a2a;"></div>
<div class="b" style="left:947px;top:893px;width:309px;height:26px;background:#333;"></div>
<div class="b" style="left:947px;top:629px;width:293px;height:25.5px;background:#272727;"></div>
<div class="b" style="left:976px;top:655px;width:263.5px;height:31.5px;background:#4b4b4b;"></div>
<div class="b" style="left:950px;top:541px;width:101.5px;height:21px;background:#242424;border:1px solid #444;border-radius:3px"></div>
<div class="b" style="left:950px;top:570.5px;width:167px;height:21.5px;background:#242424;border:1px solid #444;border-radius:3px"></div>
<div class="b" style="left:1183.5px;top:570.5px;width:67px;height:21.5px;background:#242424;border:1px solid #444;border-radius:2px"></div>
<div class="b" style="left:1233.5px;top:571px;width:1px;height:20.5px;background:#444;"></div>
<div class="b" style="left:1183.5px;top:600px;width:67px;height:20px;background:#242424;border:1px solid #444;border-radius:2px"></div>
<div class="b" style="left:1233.5px;top:600.5px;width:1px;height:19px;background:#444;"></div>
<span class="t" style="left:955.6px;top:511.8px;font-size:12.5px;color:#ececec;font-weight:bold;font-style:normal;letter-spacing:-0.793px;">Ebenen</span>
<span class="t" style="left:1013.5px;top:511.8px;font-size:12.5px;color:#8c8c8c;font-weight:bold;font-style:normal;letter-spacing:-0.583px;">Kanäle</span>
<span class="t" style="left:973.2px;top:545.0px;font-size:13px;color:#e0e0e0;font-weight:normal;font-style:normal;letter-spacing:-0.608px;">Art</span>
<span class="t" style="left:959.6px;top:574.9px;font-size:13px;color:#e0e0e0;font-weight:normal;font-style:normal;letter-spacing:-0.418px;">Normal</span>
<span class="t" style="left:1123.3px;top:574.9px;font-size:13px;color:#b8b8b8;font-weight:normal;font-style:normal;letter-spacing:-0.302px;">Deckkraft:</span>
<span class="t" style="left:1189.2px;top:574.9px;font-size:13px;color:#e6e6e6;font-weight:normal;font-style:normal;letter-spacing:-0.113px;">100%</span>
<span class="t" style="left:953.4px;top:603.8px;font-size:13px;color:#b8b8b8;font-weight:normal;font-style:normal;letter-spacing:-0.473px;">Fixieren:</span>
<span class="t" style="left:1141px;top:603.8px;font-size:13px;color:#b8b8b8;font-weight:normal;font-style:normal;letter-spacing:-0.692px;">Fläche:</span>
<span class="t" style="left:1189.2px;top:603.8px;font-size:13px;color:#e6e6e6;font-weight:normal;font-style:normal;letter-spacing:-0.113px;">100%</span>
<span class="t" style="left:999.8px;top:634.8px;font-size:13.5px;color:#f0f0f0;font-weight:bold;font-style:normal;letter-spacing:-0.380px;">Zeichenfläche 1</span>
<span class="t" style="left:1039.3px;top:663.8px;font-size:13px;color:#dcdcdc;font-weight:normal;font-style:normal;letter-spacing:-0.255px;">Beispielbild</span>
<svg style="left:0;top:0" width="1256" height="919" viewBox="0 0 1256 919"><circle cx="960.500" cy="550.500" r="3.300" fill="none" stroke="#e0e0e0" stroke-width="1.500"/><path d="M963 553.200l3.200 3.300" stroke="#e0e0e0" stroke-width="2" stroke-linecap="round"/><g fill="none" stroke="#b0b0b0" stroke-width="1.300"><path d="M1041.500 551l3.300 3.300l3.300-3.300"/><path d="M1107 580.500l3 3l3-3"/><path d="M1238.500 580l3.300 3.300l3.300-3.300"/><path d="M1238.500 609l3.300 3.300l3.300-3.300"/><path d="M980.500 640l3.300 3.300l3.300-3.300"/></g><rect x="1093.300" y="546.300" width="12" height="10.500" fill="none" stroke="#e0e0e0" stroke-width="1.100"/><path d="M1094.500 555.500l3-4l2 2.500l2-1.800l2.500 3.300z" fill="#e0e0e0"/><circle cx="1123.300" cy="551.800" r="5.300" fill="#555" stroke="#e0e0e0" stroke-width="1.100"/><path d="M1119.600 555.500a5.300 5.300 0 0 1 7.400-7.400z" fill="#e0e0e0"/><path d="M1142.500 546.500h11v3.200h-1c-.2-1.300-.8-1.800-2-1.800h-1.200v8.300c0 .9.400 1.200 1.600 1.300v1h-5.800v-1c1.200-.1 1.600-.4 1.600-1.300v-8.300h-1.200c-1.200 0-1.800.5-2 1.800h-1z" fill="#e0e0e0"/><g fill="#333" stroke="#e0e0e0" stroke-width="1.100"><rect x="1167.800" y="547.800" width="8.200" height="8.200" fill="none"/><rect x="1166.500" y="546.500" width="2.500" height="2.500"/><rect x="1174.800" y="546.500" width="2.500" height="2.500"/><rect x="1166.500" y="554.800" width="2.500" height="2.500"/><rect x="1174.800" y="554.800" width="2.500" height="2.500"/></g><path d="M1193.500 545.800h5l3 3v9h-3.500v-4.500h-4.500z" fill="none" stroke="#e0e0e0" stroke-width="1.100"/><path d="M1198.500 545.800v3h3" fill="none" stroke="#e0e0e0" stroke-width="1"/><rect x="1191" y="552.500" width="6.500" height="6" fill="#e0e0e0"/><rect x="1242" y="541" width="8" height="19" rx="4" fill="#262626" stroke="#3a3a3a" stroke-width="1"/><circle cx="1246" cy="545.800" r="4.300" fill="#cfcfcf"/><g fill="#9a9a9a"><rect x="1008" y="604.800" width="11" height="11" fill="none" stroke="#9a9a9a" stroke-width="1"/><rect x="1008.500" y="605.300" width="3.300" height="3.300"/><rect x="1015.200" y="605.300" width="3.300" height="3.300"/><rect x="1011.800" y="608.600" width="3.400" height="3.400"/><rect x="1008.500" y="612" width="3.300" height="3.300"/><rect x="1015.200" y="612" width="3.300" height="3.300"/></g><g transform="translate(1035.400 610.300) rotate(45)" fill="#8a8a8a"><path d="M-1.100 -9h2.200l.7 8h-3.600z"/><path d="M-2 0h4c1 2.500.5 5-2 7.500c-2.500-2.500-3-5-2-7.500z"/></g><g transform="translate(1057.100 610.300) scale(.8)"><path d="M0 -8l3 3.600h-2.200v3.600h3.600v-2.200l3.600 3l-3.600 3v-2.200h-3.600v3.600h2.200l-3 3.600l-3-3.600h2.200v-3.600h-3.600v2.200l-3.600-3l3.600-3v2.200h3.600v-3.600h-2.200z" fill="#e0e0e0"/></g><g fill="none" stroke="#e0e0e0" stroke-width="1.200"><path d="M1076.500 603.500v11h11M1073.500 606.500h11v11"/><path d="M1083 603.500l2.500 3h-5z" fill="#e0e0e0" stroke="none"/></g><rect x="1096.800" y="609" width="10.500" height="7.800" rx="1" fill="#e0e0e0"/><path d="M1099 609v-2.200a3 3 0 0 1 6 0v2.200" fill="none" stroke="#e0e0e0" stroke-width="1.400"/><rect x="1101.300" y="611.500" width="1.500" height="2.800" fill="#333"/><path d="M954 641.8c2.500-5.300 12-5.300 14.500 0c-2.500 5.300-12 5.300-14.500 0z" fill="#e0e0e0"/><circle cx="961.300" cy="641.8" r="2.700" fill="#2a2a2a"/><circle cx="961.300" cy="641.8" r="1.100" fill="#e0e0e0"/><path d="M954 671.4c2.500-5.300 12-5.300 14.500 0c-2.500 5.300-12 5.300-14.500 0z" fill="#e0e0e0"/><circle cx="961.300" cy="671.4" r="2.700" fill="#2a2a2a"/><circle cx="961.300" cy="671.4" r="1.100" fill="#e0e0e0"/><rect x="996.200" y="660.300" width="32" height="20.700" fill="#45d4d6"/><path d="M998.300 681c.2-6 2-10.500 5.500-11c3.500 .3 4.800 4 5 11z" fill="#f78d8b"/><ellipse cx="1004.200" cy="665.600" rx="2.700" ry="3.200" fill="#5a3324"/><path d="M1008.500 675l5 3.500l1-1.500l-4.500-4z" fill="#3b241b"/><path d="M1012.500 664l5-1.500l1.500 4.500l-5.500 1z" fill="#e8489a"/><rect x="1011.300" y="665" width="1.600" height="2.400" fill="#1d2327"/><g fill="none" stroke="#f6f6f6" stroke-width="1.300"><path d="M994.700 666.500v-8.700h12.500M1019.500 657.800h11v8.700M1030.500 674.500v8h-11M1007.200 682.500h-12.500v-8"/></g><rect x="1014.800" y="667.500" width="13.400" height="13.500" fill="#383838"/><path d="M1019.300 669h4.200l2.700 2.700v7.800h-3.700v-4.800h-3.200z" fill="#e0e0e0"/><path d="M1022.800 670.300v2.700h2.500" fill="none" stroke="#383838" stroke-width="1"/><rect x="1016.300" y="675.300" width="5.400" height="5.200" fill="#e0e0e0" stroke="#383838" stroke-width=".8"/><g fill="none" stroke="#8a8a8a" stroke-width="1.300"><rect x="1053" y="902.500" width="8" height="6.500" rx="3.200"/><rect x="1058.500" y="902.500" width="8" height="6.500" rx="3.200"/></g><path d="M1138.300 911.300h3.400l-1.700 2zM1093.300 912.300h3.400l-1.700 2z" fill="#e0e0e0"/><rect x="1107" y="900.500" width="13" height="10" fill="#e0e0e0"/><circle cx="1113.500" cy="905.500" r="3" fill="#333"/><circle cx="1141" cy="906" r="5.300" fill="#333" stroke="#e0e0e0" stroke-width="1.200"/><path d="M1137.300 909.700a5.300 5.300 0 0 1 7.400-7.400z" fill="#e0e0e0"/><path d="M1162 901h5l1 1.500h7v1.500h-13z" fill="#e0e0e0"/><rect x="1162" y="904.500" width="13" height="6.500" fill="#e0e0e0"/><rect x="1190.300" y="900.800" width="10.600" height="10.600" fill="none" stroke="#e0e0e0" stroke-width="1.200"/><path d="M1195.600 903.300v5.600M1192.800 906.100h5.600" stroke="#e0e0e0" stroke-width="1.200"/><g fill="none" stroke="#e0e0e0" stroke-width="1.200"><path d="M1217.500 903.500h9l-.8 8.500h-7.400zM1216.500 902.500h11M1220 902v-1.500h4v1.500"/><path d="M1220.300 905v5.500M1222 905v5.500M1223.700 905v5.500" stroke-width=".9"/></g></svg>
<span class="t" style="left:1082px;top:897.500px;font-size:15.500px;font-style:italic;color:#e0e0e0;letter-spacing:-0.8px">fx</span>
<!--MENUS-->
<div class="menu" style="left:69px;top:27px;width:325px;height:838px"></div>
<span class="mt" style="left:89.4px;top:33.0px;color:#111;letter-spacing:-0.11px">Rückgängig: Namen ändern</span>
<span class="mt" style="left:339.5px;top:33.0px;color:#111;letter-spacing:-0.143px">Strg+Z</span>
<span class="mt" style="left:89.4px;top:52.0px;color:#111;letter-spacing:-0.044px">Wiederholen: Horizontal spiegeln</span>
<span class="mt" style="left:281.4px;top:52.0px;color:#111;letter-spacing:0.015px">Umschalt+Strg+Z</span>
<span class="mt" style="left:89.4px;top:71.0px;color:#111;letter-spacing:-0.175px">Letzten Status ein/aus</span>
<span class="mt" style="left:316.5px;top:71.0px;color:#111;letter-spacing:0.114px">Alt+Strg+Z</span>
<div class="sep" style="left:72.5px;width:319.5px;top:92px"></div>
<span class="mt" style="left:89.4px;top:101.0px;color:#7a7a7a;letter-spacing:-0.383px">Verblassen...</span>
<span class="mt" style="left:282.5px;top:101.0px;color:#7a7a7a;letter-spacing:-0.058px">Umschalt+Strg+F</span>
<div class="sep" style="left:72.5px;width:319.5px;top:122px"></div>
<span class="mt" style="left:89.4px;top:131.0px;color:#7a7a7a;letter-spacing:-0.208px">Ausschneiden</span>
<span class="mt" style="left:339.5px;top:131.0px;color:#7a7a7a;letter-spacing:-0.255px">Strg+X</span>
<span class="mt" style="left:89.4px;top:150.0px;color:#111;letter-spacing:-0.218px">Kopieren</span>
<span class="mt" style="left:338.5px;top:150.0px;color:#111;letter-spacing:-0.198px">Strg+C</span>
<span class="mt" style="left:89.4px;top:169.0px;color:#7a7a7a;letter-spacing:-0.162px">Auf eine Ebene reduziert kopieren</span>
<span class="mt" style="left:280.6px;top:169.0px;color:#7a7a7a;letter-spacing:-0.02px">Umschalt+Strg+C</span>
<span class="mt" style="left:89.4px;top:188.0px;color:#111;letter-spacing:-0.134px">Einfügen</span>
<span class="mt" style="left:339.5px;top:188.0px;color:#111;letter-spacing:-0.255px">Strg+V</span>
<span class="mt" style="left:89.4px;top:207.0px;color:#111;letter-spacing:-0.311px">Einfügen Spezial</span>
<span class="ar" style="left:380.5px;top:210.4px;border-left-color:#111"></span>
<span class="mt" style="left:89.4px;top:226.0px;color:#7a7a7a;letter-spacing:-0.325px">Löschen</span>
<div class="sep" style="left:72.5px;width:319.5px;top:247px"></div>
<span class="mt" style="left:89.4px;top:256.0px;color:#111;letter-spacing:-0.401px">Suchen</span>
<span class="mt" style="left:340.5px;top:256.0px;color:#111;letter-spacing:-0.31px">Strg+F</span>
<span class="mt" style="left:89.4px;top:275.0px;color:#111;letter-spacing:-0.061px">Rechtschreibprüfung...</span>
<span class="mt" style="left:89.4px;top:294.0px;color:#111;letter-spacing:-0.195px">Text suchen und ersetzen...</span>
<div class="sep" style="left:72.5px;width:319.5px;top:315px"></div>
<span class="mt" style="left:89.4px;top:324.0px;color:#7a7a7a;letter-spacing:-0.159px">Fläche füllen...</span>
<span class="mt" style="left:305.4px;top:324.0px;color:#7a7a7a;letter-spacing:-0.13px">Umschalt+F5</span>
<span class="mt" style="left:89.4px;top:343.0px;color:#7a7a7a;letter-spacing:0.019px">Kontur füllen...</span>
<span class="mt" style="left:89.4px;top:362.0px;color:#7a7a7a;letter-spacing:-0.129px">Inhaltsbasierte Füllung...</span>
<div class="sep" style="left:72.5px;width:319.5px;top:383px"></div>
<span class="mt" style="left:89.4px;top:392.0px;color:#7a7a7a;letter-spacing:-0.181px">Inhaltsbasiert skalieren</span>
<span class="mt" style="left:279.6px;top:392.0px;color:#7a7a7a;letter-spacing:0.002px">Umschalt+Strg+Q</span>
<span class="mt" style="left:89.4px;top:411.0px;color:#111;letter-spacing:0.121px">Formgitter</span>
<span class="mt" style="left:89.4px;top:430.0px;color:#111;letter-spacing:-0.081px">Perspektivische Verformung</span>
<span class="mt" style="left:89.4px;top:449.0px;color:#111;letter-spacing:-0.099px">Frei transformieren</span>
<span class="mt" style="left:340.5px;top:449.0px;color:#111;letter-spacing:-0.31px">Strg+T</span>
<div class="hl" style="left:72px;width:316px;top:465px"></div>
<span class="mt" style="left:89.4px;top:468.0px;color:#fff;letter-spacing:-0.102px">Transformieren</span>
<span class="ar" style="left:380.5px;top:471.4px;border-left-color:#fff"></span>
<span class="mt" style="left:89.4px;top:487.0px;color:#7a7a7a;letter-spacing:-0.107px">Ebenen automatisch ausrichten...</span>
<span class="mt" style="left:89.4px;top:506.0px;color:#7a7a7a;letter-spacing:-0.084px">Ebenen automatisch überblenden...</span>
<span class="mt" style="left:89.4px;top:525.0px;color:#111;letter-spacing:-0.089px">Himmel austauschen...</span>
<div class="sep" style="left:72.5px;width:319.5px;top:546px"></div>
<span class="mt" style="left:89.4px;top:555.0px;color:#111;letter-spacing:-0.177px">Pinselvorgabe festlegen...</span>
<span class="mt" style="left:89.4px;top:574.0px;color:#111;letter-spacing:-0.101px">Muster festlegen...</span>
<span class="mt" style="left:89.4px;top:593.0px;color:#7a7a7a;letter-spacing:-0.218px">Eigene Form festlegen...</span>
<div class="sep" style="left:72.5px;width:319.5px;top:614px"></div>
<span class="mt" style="left:89.4px;top:623.0px;color:#111;letter-spacing:-0.331px">Entleeren</span>
<span class="ar" style="left:380.5px;top:626.4px;border-left-color:#111"></span>
<div class="sep" style="left:72.5px;width:319.5px;top:644px"></div>
<span class="mt" style="left:89.4px;top:653.0px;color:#111;letter-spacing:-0.192px">Adobe PDF-Vorgaben...</span>
<span class="mt" style="left:89.4px;top:672.0px;color:#111;letter-spacing:-0.111px">Vorgaben</span>
<span class="ar" style="left:380.5px;top:675.4px;border-left-color:#111"></span>
<span class="mt" style="left:89.4px;top:691.0px;color:#111;letter-spacing:-0.064px">Remoteverbindungen...</span>
<div class="sep" style="left:72.5px;width:319.5px;top:712px"></div>
<span class="mt" style="left:89.4px;top:721.0px;color:#111;letter-spacing:-0.15px">Farbeinstellungen...</span>
<span class="mt" style="left:281.4px;top:721.0px;color:#111;letter-spacing:-0.03px">Umschalt+Strg+K</span>
<span class="mt" style="left:89.4px;top:740.0px;color:#111;letter-spacing:-0.206px">Profil zuweisen...</span>
<span class="mt" style="left:89.4px;top:759.0px;color:#111;letter-spacing:0.0px">In Profil umwandeln...</span>
<div class="sep" style="left:72.5px;width:319.5px;top:780px"></div>
<span class="mt" style="left:89.4px;top:789.0px;color:#111;letter-spacing:-0.137px">Tastaturbefehle...</span>
<span class="mt" style="left:258.3px;top:789.0px;color:#111;letter-spacing:0.086px">Alt+Umschalt+Strg+K</span>
<span class="mt" style="left:89.4px;top:808.0px;color:#111;letter-spacing:-0.204px">Menüs...</span>
<span class="mt" style="left:254.3px;top:808.0px;color:#111;letter-spacing:0.192px">Alt+Umschalt+Strg+M</span>
<span class="mt" style="left:89.4px;top:827.0px;color:#111;letter-spacing:-0.169px">Symbolleiste...</span>
<span class="mt" style="left:89.4px;top:846.0px;color:#111;letter-spacing:-0.027px">Voreinstellungen</span>
<span class="ar" style="left:380.5px;top:849.4px;border-left-color:#111"></span>
<div class="menu" style="left:388px;top:462px;width:266px;height:413px"></div>
<span class="mt" style="left:408.5px;top:468.0px;color:#111;letter-spacing:-0.31px">Erneut</span>
<span class="mt" style="left:542.8px;top:468.0px;color:#111;letter-spacing:-0.058px">Umschalt+Strg+T</span>
<div class="sep" style="left:392px;width:258px;top:489px"></div>
<span class="mt" style="left:408.5px;top:498.0px;color:#111;letter-spacing:-0.392px">Skalieren</span>
<span class="mt" style="left:408.5px;top:517.0px;color:#111;letter-spacing:-0.36px">Drehen</span>
<span class="mt" style="left:408.5px;top:536.0px;color:#111;letter-spacing:-0.139px">Neigen</span>
<span class="mt" style="left:408.5px;top:555.0px;color:#111;letter-spacing:-0.437px">Verzerren</span>
<span class="mt" style="left:408.5px;top:574.0px;color:#111;letter-spacing:-0.213px">Perspektivisch</span>
<div class="sep" style="left:392px;width:258px;top:595px"></div>
<span class="mt" style="left:408.5px;top:604.0px;color:#111;letter-spacing:-0.007px">Verformen</span>
<span class="mt" style="left:408.5px;top:623.0px;color:#7a7a7a;letter-spacing:0.076px">Verkrümmung horizontal teilen</span>
<span class="mt" style="left:408.5px;top:642.0px;color:#7a7a7a;letter-spacing:0.042px">Verkrümmung vertikal teilen</span>
<span class="mt" style="left:408.5px;top:661.0px;color:#7a7a7a;letter-spacing:0.044px">Verkrümmung quer teilen</span>
<span class="mt" style="left:408.5px;top:680.0px;color:#7a7a7a;letter-spacing:0.076px">Verkrümmungsteilung entfernen</span>
<div class="sep" style="left:392px;width:258px;top:701px"></div>
<span class="mt" style="left:408.5px;top:710.0px;color:#7a7a7a;letter-spacing:0.07px">Ankerpunkt für Verkrümmung konvertieren</span>
<div class="sep" style="left:392px;width:258px;top:731px"></div>
<span class="mt" style="left:408.5px;top:740.0px;color:#7a7a7a;letter-spacing:0.026px">Hilfslinien aktivieren/deaktivieren</span>
<div class="sep" style="left:392px;width:258px;top:761px"></div>
<span class="mt" style="left:408.5px;top:770.0px;color:#111;letter-spacing:-0.251px">Um 180° drehen</span>
<span class="mt" style="left:408.5px;top:789.0px;color:#111;letter-spacing:-0.141px">90° im Uhrzeigersinn drehen</span>
<span class="mt" style="left:408.5px;top:808.0px;color:#111;letter-spacing:-0.173px">90° gegen den Uhrzeigersinn drehen</span>
<div class="sep" style="left:392px;width:258px;top:829px"></div>
<div class="hl" style="left:391px;width:260px;top:835px"></div>
<span class="mt" style="left:408.5px;top:838.0px;color:#fff;letter-spacing:-0.04px">Horizontal spiegeln</span>
<span class="mt" style="left:408.5px;top:857.0px;color:#111;letter-spacing:-0.135px">Vertikal spiegeln</span>
</body></html>
